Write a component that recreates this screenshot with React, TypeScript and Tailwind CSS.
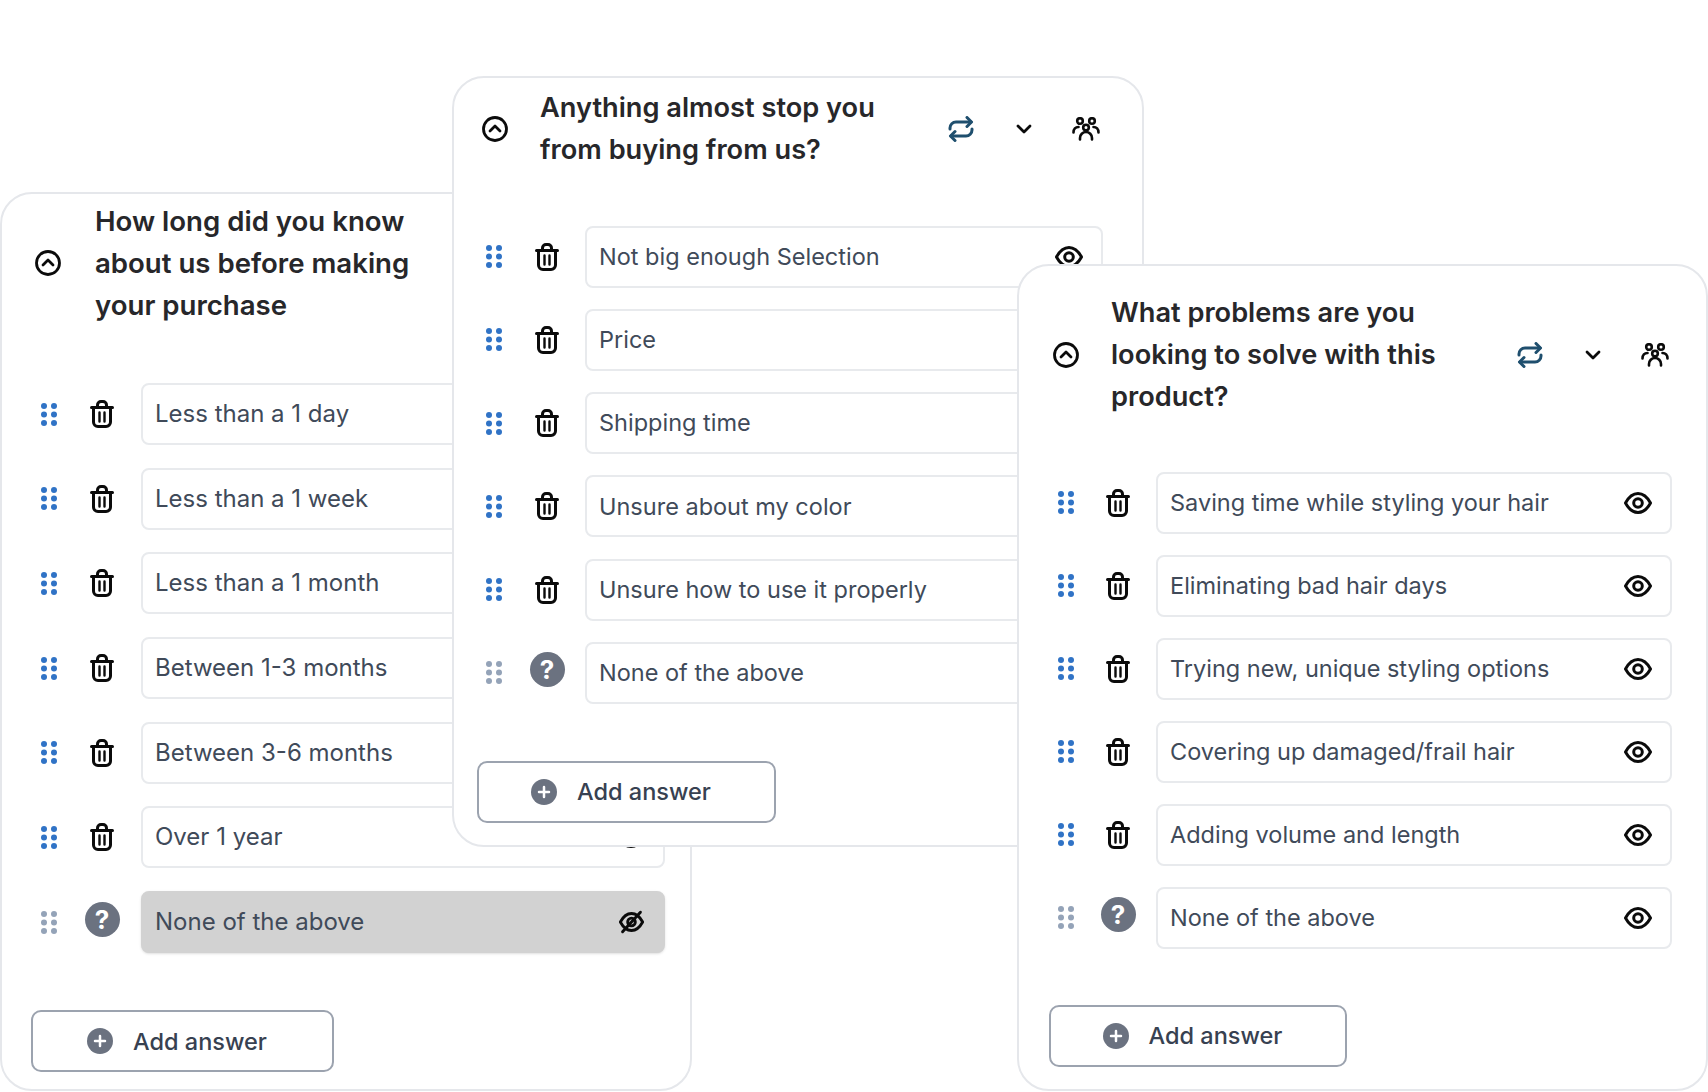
import type { ReactNode } from 'react';

function DragDots({ muted }: { muted?: boolean }) {
    return (
        <svg viewBox="0 0 16 23" className={`w-4 h-[23px] shrink-0 ${muted ? 'text-[#94a3b8]' : 'text-[#3073c6]'}`} fill="currentColor">
            {[3, 11.5, 20].map((y) => (
                <g key={y}>
                    <circle cx="3" cy={y} r="3" />
                    <circle cx="13" cy={y} r="3" />
                </g>
            ))}
        </svg>
    );
}

function TrashIcon() {
    return (
        <svg viewBox="0 0 24 28" className="w-6 h-7 shrink-0" fill="none" stroke="#0b0b0b" strokeWidth="3" strokeLinecap="round" strokeLinejoin="round">
            <path d="M1.500 7.500h21" />
            <path d="M7.500 7V5a3.500 3.500 0 0 1 3.500-3.500h2A3.500 3.500 0 0 1 16.500 5v2" />
            <path d="M3.500 7.500v14.500a4.500 4.500 0 0 0 4.500 4.500h8a4.500 4.500 0 0 0 4.500-4.500V7.500" />
            <path d="M9.500 12.500v9M14.500 12.500v9" strokeWidth="2.400" />
        </svg>
    );
}

function QuestionBadge() {
    return (
        <div className="-mt-1.5 w-[35px] h-[35px] mx-[-5.5px] rounded-full bg-[#6b7280] shrink-0 flex items-center justify-center text-white font-bold text-[26px]">
            ?
        </div>
    );
}

function EyeIcon() {
    return (
        <svg viewBox="0 0 28 22" className="w-7 h-[22px]" fill="none" stroke="#0b0b0b" strokeWidth="3">
            <path d="M1.500 11C5 4.500 9 1.500 14 1.500S23 4.500 26.500 11C23 17.500 19 20.500 14 20.500S5 17.500 1.500 11Z" strokeLinejoin="round" />
            <circle cx="14" cy="11" r="4.300" />
        </svg>
    );
}

function EyeOffIcon() {
    return (
        <svg viewBox="0 0 28 26" className="w-[25px] h-[24px] mr-[1.500px]" fill="none" stroke="#0b0b0b" strokeWidth="3.200" strokeLinecap="round">
            <path d="M1.500 13C5 6.500 9 3.500 14 3.500S23 6.500 26.500 13C23 19.500 19 22.500 14 22.500S5 19.500 1.500 13Z" strokeLinejoin="round" />
            <circle cx="14" cy="13" r="4.300" />
            <path d="M24 2 4 24" />
        </svg>
    );
}

function CollapseIcon() {
    return (
        <svg viewBox="0 0 26 26" className="w-[26px] h-[26px] shrink-0" fill="none" stroke="#0b0b0b" strokeWidth="2.800" strokeLinecap="round" strokeLinejoin="round">
            <circle cx="13" cy="13" r="11.500" />
            <path d="m8 15 5-5 5 5" />
        </svg>
    );
}

function HeaderIcons({ className }: { className: string }) {
    return (
        <div className={`flex items-center ${className}`}>
            <svg viewBox="0 0 26 26" className="w-[26px] h-[26px]" fill="none" stroke="#1f4f6e" strokeWidth="3" strokeLinecap="round" strokeLinejoin="round">
                <path d="m19 1.500 4.500 4.500-4.500 4.500" />
                <path d="M23 6H8a6 6 0 0 0-6 6v1" />
                <path d="m7 24.500-4.500-4.500 4.500-4.500" />
                <path d="M3 20h15a6 6 0 0 0 6-6v-1" />
            </svg>
            <svg viewBox="0 0 16 10" className="w-4 h-2.5 ml-[41.500px]" fill="none" stroke="#0b0b0b" strokeWidth="2.800" strokeLinecap="round" strokeLinejoin="round">
                <path d="m2 2 6 6 6-6" />
            </svg>
            <svg viewBox="0 0 28 24" className="w-7 h-6 ml-[40.500px]" fill="none" stroke="#0b0b0b" strokeWidth="2.600" strokeLinecap="round">
                <circle cx="8" cy="4" r="2.800" />
                <circle cx="20" cy="4" r="2.800" />
                <circle cx="14" cy="10.500" r="2.800" />
                <path d="M1.500 15.500c0-3.500 2-5.500 5-5.500" />
                <path d="M26.500 15.500c0-3.500-2-5.500-5-5.500" />
                <path d="M8 22.500v-1.500a6 6 0 0 1 12 0v1.500" />
            </svg>
        </div>
    );
}

function AnswerRow({ label, last, hidden, spacing, size }: { label: string; last?: boolean; hidden?: boolean; spacing: [string, string]; size: string }) {
    return (
        <div className="flex items-center">
            <DragDots muted={last} />
            <div className={`flex justify-center ${spacing[0]}`}>{last ? <QuestionBadge /> : <TrashIcon />}</div>
            <div
                className={`flex-1 h-[62px] rounded-lg border-2 flex items-center justify-between pl-[12px] pr-[18px] text-[#404a59] ${size} ${spacing[1]} ${
                    hidden ? 'bg-[#d2d2d2] border-[#d2d2d2] shadow-sm' : 'bg-white border-[#e8eaed]'
                }`}
            >
                <span>{label}</span>
                {hidden ? <EyeOffIcon /> : <EyeIcon />}
            </div>
        </div>
    );
}

function AddAnswer({ className }: { className: string }) {
    return (
        <div className={`h-[62px] rounded-[10px] border-2 border-[#9ca3af] flex items-center justify-center gap-[20px] pr-[11px] bg-white text-[23.500px] font-medium text-[#374151] ${className}`}>
            <div className="w-[26px] h-[26px] rounded-full bg-[#6b7280] flex items-center justify-center">
                <svg viewBox="0 0 14 14" className="w-3.5 h-3.5" fill="none" stroke="white" strokeWidth="2.500" strokeLinecap="round">
                    <path d="M7 2v10M2 7h10" />
                </svg>
            </div>
            <span>Add answer</span>
        </div>
    );
}

function Card({ className, children }: { className: string; children: ReactNode }) {
    return <div className={`absolute bg-white border-2 border-[#e5e7eb] rounded-[32px] ${className}`}>{children}</div>;
}

export default function App() {
    return (
        <div className="relative w-[1708px] h-[1092px] bg-white overflow-hidden font-['Inter',sans-serif]">
            {/* Left card */}
            <Card className="left-0 top-[192px] w-[692px] h-[899px] pt-[6px] pl-[47px] pr-[25px]">
                <div className="flex items-center -ml-[14px]">
                    <CollapseIcon />
                    <h2 className="ml-[34px] w-[340px] text-[27.600px] leading-[42px] font-semibold text-[#27272a]">
                        How long did you know about us before making your purchase
                    </h2>
                </div>
                <div className="mt-[57px] -ml-[8px] flex flex-col gap-[22.700px]">
                    {['Less than a 1 day', 'Less than a 1 week', 'Less than a 1 month', 'Between 1-3 months', 'Between 3-6 months', 'Over 1 year'].map((a) => (
                        <AnswerRow key={a} label={a} spacing={['ml-[33px]', 'ml-[27px]']} size="text-[24px]" />
                    ))}
                    <AnswerRow label="None of the above" last hidden spacing={['ml-[33px]', 'ml-[27px]']} size="text-[24px]" />
                </div>
                <AddAnswer className="mt-[57px] -ml-[18px] w-[303px]" />
            </Card>

            {/* Middle card */}
            <Card className="left-[452px] top-[76px] w-[692px] h-[771px] pt-[9px] pl-[32px] pr-[39px]">
                <div className="flex items-center -ml-[4px]">
                    <CollapseIcon />
                    <h2 className="ml-[32px] w-[360px] text-[27.200px] leading-[42px] font-semibold text-[#27272a]">
                        Anything almost stop you from buying from us?
                    </h2>
                    <HeaderIcons className="ml-auto mr-[3px]" />
                </div>
                <div className="mt-[54.500px] flex flex-col gap-[21.300px]">
                    {['Not big enough Selection', 'Price', 'Shipping time', 'Unsure about my color', 'Unsure how to use it properly'].map((a) => (
                        <AnswerRow key={a} label={a} spacing={['ml-[33px]', 'ml-[26px]']} size="text-[23.500px]" />
                    ))}
                    <AnswerRow label="None of the above" last spacing={['ml-[33px]', 'ml-[26px]']} size="text-[23.500px]" />
                </div>
                <AddAnswer className="mt-[57px] -ml-[9px] w-[299px]" />
            </Card>

            {/* Right card */}
            <Card className="left-[1017px] top-[264px] w-[691px] h-[827px] pt-[26px] pl-[39px] pr-[34px]">
                <div className="flex items-center -ml-[5px]">
                    <CollapseIcon />
                    <h2 className="ml-[32px] w-[380px] text-[27.200px] leading-[42px] font-semibold text-[#27272a]">
                        What problems are you looking to solve with this product?
                    </h2>
                    <HeaderIcons className="ml-auto mr-[3px]" />
                </div>
                <div className="mt-[53.500px] flex flex-col gap-[21.100px]">
                    {['Saving time while styling your hair', 'Eliminating bad hair days', 'Trying new, unique styling options', 'Covering up damaged/frail hair', 'Adding volume and length'].map((a) => (
                        <AnswerRow key={a} label={a} spacing={['ml-[32px]', 'ml-[26px]']} size="text-[23.500px]" />
                    ))}
                    <AnswerRow label="None of the above" last spacing={['ml-[32px]', 'ml-[26px]']} size="text-[23.500px]" />
                </div>
                <AddAnswer className="mt-[56px] -ml-[9px] w-[298px]" />
            </Card>
        </div>
    );
}
